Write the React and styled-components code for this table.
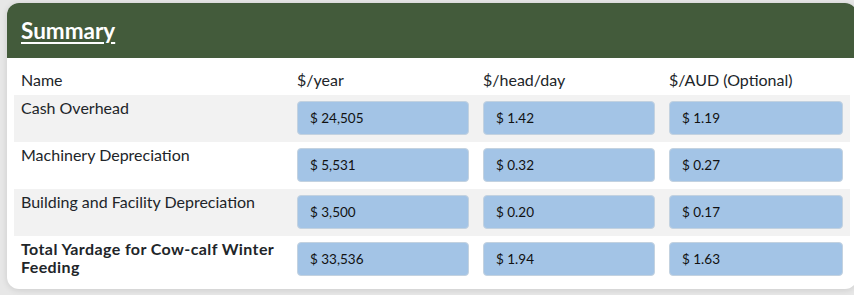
import React from 'react';
import styled, { createGlobalStyle } from 'styled-components';

const Global = createGlobalStyle`
  html, body { margin: 0; padding: 0; background: #e7e7e7; overflow: hidden; }
  body { font-family: Lato, "Open Sans", sans-serif; color: #212529; }
  * { box-sizing: border-box; }
`;

const Page = styled.div`
  width: 854px;
  height: 295px;
  padding: 3px 0 0 7px;
  overflow: hidden;
`;

const Card = styled.section`
  width: 850px;
  background: #fff;
  border-radius: 12px;
  box-shadow: 0 1px 6px rgba(0, 0, 0, 0.12);
  overflow: hidden;
  padding-bottom: 6px;
`;

const Header = styled.header`
  background: #435b3b;
  height: 55px;
  display: flex;
  align-items: center;
  padding-left: 14px;
`;

const Title = styled.h2`
  margin: 0;
  color: #fff;
  font-size: 22.5px;
  font-weight: 700;
  text-decoration: underline;
  text-decoration-thickness: 2px;
  text-underline-offset: 3px;
`;

const Table = styled.div`
  margin: 0 7px;
  display: flex;
  flex-direction: column;
`;

const Row = styled.div`
  display: grid;
  grid-template-columns: 276px 186px 186px 188px;
  background: ${(p) => (p.$shaded ? '#f2f2f2' : 'transparent')};
  height: ${(p) => (p.$head ? '37px' : '47px')};
`;

const HeadCell = styled.div`
  padding: 13px 7px 0;
  font-size: 16px;
  line-height: 18px;
`;

const NameCell = styled.div`
  padding: 4px 2px 0 7px;
  font-size: 16px;
  line-height: 18px;
  font-weight: ${(p) => (p.$bold ? 700 : 400)};
  letter-spacing: ${(p) => (p.$bold ? '0.4px' : '0')};
`;

const ValueCell = styled.div`
  padding: 6px 7px 7px;
`;

const Value = styled.div`
  height: 34px;
  display: flex;
  align-items: center;
  padding: 0 12px;
  background: #a3c4e6;
  border: 1px solid #c3d2e0;
  border-radius: 4px;
  font-size: 13.5px;
  color: #111;
`;

const rows = [
  { name: 'Cash Overhead', vals: ['$ 24,505', '$ 1.42', '$ 1.19'] },
  { name: 'Machinery Depreciation', vals: ['$ 5,531', '$ 0.32', '$ 0.27'] },
  { name: 'Building and Facility Depreciation', vals: ['$ 3,500', '$ 0.20', '$ 0.17'] },
  { name: 'Total Yardage for Cow-calf Winter Feeding', vals: ['$ 33,536', '$ 1.94', '$ 1.63'], bold: true },
];

export default function App() {
  return (
    <>
      <Global />
      <Page>
        <Card>
          <Header>
            <Title>Summary</Title>
          </Header>
          <Table>
            <Row $head>
              <HeadCell>Name</HeadCell>
              <HeadCell>$/year</HeadCell>
              <HeadCell>$/head/day</HeadCell>
              <HeadCell>$/AUD (Optional)</HeadCell>
            </Row>
            {rows.map((r, i) => (
              <Row key={r.name} $shaded={i % 2 === 0}>
                <NameCell $bold={r.bold}>{r.name}</NameCell>
                {r.vals.map((v) => (
                  <ValueCell key={v}>
                    <Value>{v}</Value>
                  </ValueCell>
                ))}
              </Row>
            ))}
          </Table>
        </Card>
      </Page>
    </>
  );
}
